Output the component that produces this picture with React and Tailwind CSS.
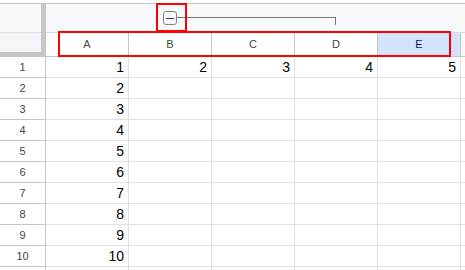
import React from 'react';

const COLS = ['A', 'B', 'C', 'D', 'E'];
const ROWS = [1, 2, 3, 4, 5, 6, 7, 8, 9, 10, 11];

export default function App() {
  return (
    <div
      className="relative w-[465px] h-[270px] overflow-hidden bg-white"
      style={{ fontFamily: '"Liberation Sans", Arial, sans-serif' }}
    >
      {/* top strip */}
      <div className="h-[4px] border-b border-[#c4c7c5]" />

      {/* header: corner + group bar + column letters */}
      <div className="flex">
        <div className="w-[46px] flex flex-col border-r border-[#c4c7c5]">
          <div className="flex flex-1">
            <div className="flex-1 flex flex-col">
              <div className="h-[29px] bg-[#f8f9fa] border-b border-[#dadce0]" />
              <div className="h-[19px] bg-[#f3f5f9]" />
            </div>
            <div className="w-[4px] bg-[#c7c7c7]" />
          </div>
          <div className="h-[4px] bg-[#c7c7c7]" />
          <div className="h-[1px] bg-[#c4c7c5]" />
        </div>

        <div className="flex-1 flex flex-col">
          {/* group bar */}
          <div className="h-[29px] bg-[#f8f9fa] border-b border-[#dadce0] flex items-start pl-[117px] pt-[7px]">
            <div className="w-[14px] h-[14px] rounded-[3px] border-[1.5px] border-[#80868b] flex items-center justify-center">
              <div className="w-[8px] h-[1px] bg-[#3c4043]" />
            </div>
            <div className="w-[159px] h-[8px] mt-[6px] border-t border-r border-[#757575]" />
          </div>

          {/* column letters */}
          <div className="flex h-[24px] border-b border-[#c4c7c5]">
            {COLS.map((c) => (
              <div
                key={c}
                className={`w-[83px] shrink-0 flex items-center justify-center text-[11px] border-r border-[#c4c7c5] ${
                  c === 'E' ? 'bg-[#d3e3fd] text-[#041e49]' : 'bg-white text-[#444746]'
                }`}
              >
                {c}
              </div>
            ))}
            <div className="flex-1 bg-[#f8f9fa]" />
          </div>
        </div>
      </div>

      {/* rows */}
      {ROWS.map((r) => (
        <div key={r} className="flex h-[21px]">
          <div className="w-[46px] shrink-0 flex items-center justify-center text-[11px] text-[#444746] border-r border-b border-[#c4c7c5] bg-white">
            {r <= 10 ? r : ''}
          </div>
          {COLS.map((c, i) => (
            <div
              key={c}
              className="w-[83px] shrink-0 flex items-center justify-end pr-[4px] text-[14px] text-black border-r border-b border-[#e1e1e1]"
            >
              {r === 1 ? i + 1 : i === 0 && r <= 10 ? r : ''}
            </div>
          ))}
          <div className="flex-1 border-b border-[#e1e1e1]" />
        </div>
      ))}

      {/* annotation boxes */}
      <div className="absolute left-[156px] top-[3px] w-[31px] h-[29px] border-2 border-[#ff0000]" />
      <div className="absolute left-[58px] top-[31px] w-[393px] h-[26px] border-2 border-[#ff0000]" />
    </div>
  );
}
